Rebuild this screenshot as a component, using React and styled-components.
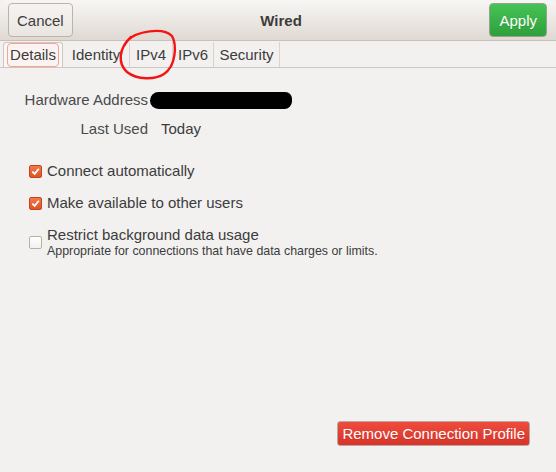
import React from "react";
import styled, { createGlobalStyle } from "styled-components";

const GlobalStyle = createGlobalStyle`
  html, body {
    margin: 0;
    padding: 0;
    background: #f2f1f0;
  }
  body {
    font-family: "Liberation Sans", "DejaVu Sans", sans-serif;
    color: #3c3c3c;
  }
`;

const Window = styled.div`
  position: relative;
  width: 556px;
  height: 472px;
  display: flex;
  flex-direction: column;
  background: #f2f1f0;
  overflow: hidden;
`;

const HeaderBar = styled.header`
  height: 40px;
  display: grid;
  grid-template-columns: auto 1fr auto;
  align-items: center;
  padding: 0 9px 0 8px;
  background: linear-gradient(#f7f6f5, #e0d9d2);
  border-bottom: 1px solid #c9c1b9;
  border-radius: 6px 6px 0 0;
`;

const Title = styled.h1`
  margin: 0;
  text-align: center;
  font-size: 15px;
  font-weight: bold;
  color: #3c3c3c;
`;

const HeaderButton = styled.button`
  height: 34px;
  padding: 0 ${(p) => (p.$suggested ? "9px" : "8px")};
  font-family: inherit;
  font-size: 15px;
  border-radius: 4px;
  border: 1px solid ${(p) => (p.$suggested ? "#8fa58c" : "#bcb4ac")};
  color: ${(p) => (p.$suggested ? "#ffffff" : "#3c3c3c")};
  background: ${(p) =>
    p.$suggested
      ? "linear-gradient(#46c356, #2f9f3b)"
      : "linear-gradient(#f6f4f2, #e9e5e1)"};
  text-shadow: ${(p) => (p.$suggested ? "0 1px 0 rgba(0,0,0,0.15)" : "none")};
`;

const TabStrip = styled.nav`
  height: 26px;
  display: flex;
  padding-left: 3px;
  border-bottom: 1px solid #cdc7c2;
`;

const Tab = styled.div`
  width: ${(p) => p.$w}px;
  box-sizing: border-box;
  margin-top: 1px;
  display: flex;
  align-items: center;
  justify-content: center;
  font-size: 15px;
  color: #3c3c3c;
  border-right: 1px solid #d9d4cf;
  ${(p) =>
    p.$active &&
    `
    background: #f8f7f6;
    border: 1px solid #cdc7c2;
    border-bottom: none;
    border-radius: 3px 3px 0 0;
  `}
`;

const FocusRing = styled.span`
  padding: 2px 2px 3px;
  border: 1px solid #f0a595;
  border-radius: 4px;
  background: #fbf3f1;
`;

const Body = styled.main`
  flex: 1;
  display: flex;
  flex-direction: column;
  padding-top: 23px;
`;

const InfoGrid = styled.dl`
  margin: 0;
  display: grid;
  grid-template-columns: 148px auto;
  column-gap: 13px;
  row-gap: 11px;
  justify-content: start;
  font-size: 15px;
  line-height: 18px;
`;

const Label = styled.dt`
  text-align: right;
  color: #4a4a4a;
`;

const Value = styled.dd`
  margin: 0;
  display: flex;
  align-items: center;
  color: #3c3c3c;
`;

const Redaction = styled.span`
  display: block;
  margin-left: -11px;
  width: 142px;
  height: 17px;
  background: #000;
  border-radius: 9px 7px 8px 9px;
`;

const Options = styled.div`
  margin-top: 24px;
  padding-left: 29px;
  display: flex;
  flex-direction: column;
  gap: 14px;
`;

const CheckRow = styled.label`
  display: flex;
  align-items: center;
  gap: 5px;
`;

const Box = styled.span`
  width: 13px;
  height: 13px;
  box-sizing: border-box;
  flex: none;
  border-radius: 2px;
  display: flex;
  align-items: center;
  justify-content: center;
  border: 1px solid ${(p) => (p.$checked ? "#c2461c" : "#b8b1aa")};
  background: ${(p) =>
    p.$checked
      ? "linear-gradient(#f2794a, #e05523)"
      : "linear-gradient(#ffffff, #f3f1ef)"};
`;

const CheckText = styled.span`
  display: flex;
  flex-direction: column;
`;

const Main = styled.span`
  font-size: 15px;
  line-height: 18px;
  color: #3c3c3c;
`;

const Hint = styled.span`
  font-size: 12.4px;
  line-height: 14px;
  color: #3c3c3c;
`;

const Footer = styled.footer`
  margin-top: auto;
  display: flex;
  justify-content: flex-end;
  padding: 0 26px 26px 0;
`;

const DangerButton = styled.button`
  height: 25px;
  padding: 0 4px;
  font-family: inherit;
  font-size: 15px;
  color: #fff;
  border-radius: 3px;
  border: 1px solid #b3aba4;
  background: linear-gradient(#ef4c3c, #d8322a);
  text-shadow: 0 1px 0 rgba(0, 0, 0, 0.12);
`;

const Annotation = styled.svg`
  position: absolute;
  left: 0;
  top: 0;
  pointer-events: none;
`;

const tabs = [
  { name: "Details", w: 60, active: true },
  { name: "Identity", w: 67 },
  { name: "IPv4", w: 43 },
  { name: "IPv6", w: 41 },
  { name: "Security", w: 66 },
];

const CheckMark = () => (
  <svg width="9" height="9" viewBox="0 0 9 9">
    <path d="M1.3 4.6 L3.6 6.9 L7.8 1.8" fill="none" stroke="#fff" strokeWidth="1.8" />
  </svg>
);

const Check = ({ checked, label, hint }) => (
  <CheckRow>
    <Box $checked={checked}>{checked && <CheckMark />}</Box>
    <CheckText>
      <Main>{label}</Main>
      {hint && <Hint>{hint}</Hint>}
    </CheckText>
  </CheckRow>
);

export default function App() {
  return (
    <>
      <GlobalStyle />
      <Window>
        <HeaderBar>
          <HeaderButton>Cancel</HeaderButton>
          <Title>Wired</Title>
          <HeaderButton $suggested>Apply</HeaderButton>
        </HeaderBar>
        <TabStrip>
          {tabs.map((t) => (
            <Tab key={t.name} $w={t.w} $active={t.active}>
              {t.active ? <FocusRing>{t.name}</FocusRing> : t.name}
            </Tab>
          ))}
        </TabStrip>
        <Body>
          <InfoGrid>
            <Label>Hardware Address</Label>
            <Value>
              <Redaction />
            </Value>
            <Label>Last Used</Label>
            <Value>Today</Value>
          </InfoGrid>
          <Options>
            <Check checked label="Connect automatically" />
            <Check checked label="Make available to other users" />
            <Check
              label="Restrict background data usage"
              hint="Appropriate for connections that have data charges or limits."
            />
          </Options>
          <Footer>
            <DangerButton>Remove Connection Profile</DangerButton>
          </Footer>
        </Body>
        <Annotation width="556" height="472">
          <path
            d="M127 41 C136 31, 163 27, 172 36 C177 45, 176 66, 164 74 C155 80, 137 80, 127 72 C118 64, 118 49, 131 37"
            fill="none"
            stroke="#f51414"
            strokeWidth="2.4"
            strokeLinecap="round"
          />
        </Annotation>
      </Window>
    </>
  );
}
